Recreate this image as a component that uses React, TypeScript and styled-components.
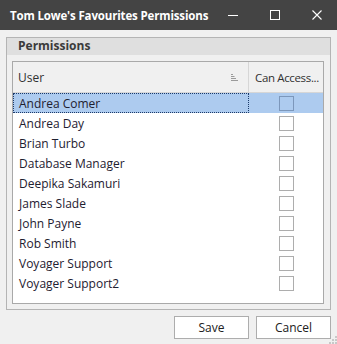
import React, {useState} from 'react';
import styled, {createGlobalStyle} from 'styled-components';

const users = [
    'Andrea Comer',
    'Andrea Day',
    'Brian Turbo',
    'Database Manager',
    'Deepika Sakamuri',
    'James Slade',
    'John Payne',
    'Rob Smith',
    'Voyager Support',
    'Voyager Support2',
];

const App = () => {
    const [selected, setSelected] = useState(0);
    const [access, setAccess] = useState<boolean[]>(users.map(() => false));

    const toggle = (i: number) => {
        setAccess(prev => prev.map((v, idx) => (idx === i ? !v : v)));
    };

    return (
        <>
            <GlobalStyle/>
            <Window>
                <TitleBar>
                    <Title>Tom Lowe's Favourites Permissions</Title>
                    <Controls>
                        <ControlButton>
                            <svg width="10" height="10" viewBox="0 0 10 10">
                                <line x1="0" y1="5.5" x2="10" y2="5.5" stroke="#fff" strokeWidth="1"/>
                            </svg>
                        </ControlButton>
                        <ControlButton>
                            <svg width="10" height="10" viewBox="0 0 10 10">
                                <rect x="0.5" y="0.5" width="9" height="9" fill="none" stroke="#fff" strokeWidth="1"/>
                            </svg>
                        </ControlButton>
                        <ControlButton>
                            <svg width="10" height="10" viewBox="0 0 10 10">
                                <path d="M0.5 0.5 L9.5 9.5 M9.5 0.5 L0.5 9.5" stroke="#fff" strokeWidth="1.1"/>
                            </svg>
                        </ControlButton>
                    </Controls>
                </TitleBar>
                <Body>
                    <Group>
                        <GroupHeader>Permissions</GroupHeader>
                        <Grid>
                            <HeaderRow>
                                <HeaderCell>
                                    User
                                    <SortIcon width="7" height="7" viewBox="0 0 7 7">
                                        <path d="M0 0.5h2M0 2.5h3.5M0 4.5h5M0 6.5h7" stroke="#9a9a9a" strokeWidth="1"/>
                                    </SortIcon>
                                </HeaderCell>
                                <HeaderCell $last><HeaderText>Can Access...</HeaderText></HeaderCell>
                            </HeaderRow>
                            {users.map((u, i) => (
                                <Row key={u} $selected={selected === i} onClick={() => setSelected(i)}>
                                    <NameCell $focused={selected === i}>{u}</NameCell>
                                    <CheckCell>
                                        <CheckBox
                                            $selected={selected === i}
                                            $checked={access[i]}
                                            onClick={() => toggle(i)}
                                        />
                                    </CheckCell>
                                </Row>
                            ))}
                        </Grid>
                    </Group>
                    <Footer>
                        <Button>Save</Button>
                        <Button>Cancel</Button>
                    </Footer>
                    <Grip width="8" height="8" viewBox="0 0 8 8">
                        <rect x="6" y="0" width="2" height="2" fill="#c8c8c8"/>
                        <rect x="3" y="3" width="2" height="2" fill="#c8c8c8"/>
                        <rect x="6" y="3" width="2" height="2" fill="#c8c8c8"/>
                        <rect x="0" y="6" width="2" height="2" fill="#c8c8c8"/>
                        <rect x="3" y="6" width="2" height="2" fill="#c8c8c8"/>
                        <rect x="6" y="6" width="2" height="2" fill="#c8c8c8"/>
                    </Grip>
                </Body>
            </Window>
        </>
    );
};
export default App

const GlobalStyle = createGlobalStyle`
  html, body {
    margin: 0;
    padding: 0;
    background: #f0f0f0;
  }
  body {
    font-family: "Open Sans", "Noto Sans", "Liberation Sans", sans-serif;
    font-size: 12px;
    color: #202020;
  }
`
const Window = styled.div`
  width: 337px;
  height: 344px;
  display: flex;
  flex-direction: column;
  background: #f0f0f0;
  overflow: hidden;
`
const TitleBar = styled.div`
  height: 30px;
  background: #444444;
  display: flex;
  align-items: center;
  justify-content: space-between;
  padding-left: 10px;
  flex-shrink: 0;
`
const Title = styled.div`
  color: #ffffff;
  font-weight: 700;
  font-size: 11.5px;
  letter-spacing: -0.15px;
  white-space: nowrap;
  flex-shrink: 0;
`
const Controls = styled.div`
  display: flex;
  height: 100%;
  margin-right: -1px;
`
const ControlButton = styled.div`
  width: 42px;
  height: 100%;
  display: flex;
  align-items: center;
  justify-content: center;
`
const Body = styled.div`
  position: relative;
  flex: 1;
  display: flex;
  flex-direction: column;
  padding: 7px 6px 0 6px;
`
const Group = styled.div`
  height: 273px;
  box-sizing: border-box;
  border: 1px solid #b4b4b4;
  display: flex;
  flex-direction: column;
  padding: 0 6px 5px 5px;
`
const GroupHeader = styled.div`
  height: 17px;
  margin: 0 -6px 0 -5px;
  background: #dfdfdf;
  font-weight: 700;
  color: #3a3a3a;
  padding-left: 11px;
  line-height: 16px;
  flex-shrink: 0;
`
const Grid = styled.div`
  margin-top: 6px;
  flex: 1;
  border: 1px solid #a9a9a9;
  background: #ffffff;
  display: flex;
  flex-direction: column;
`
const HeaderRow = styled.div`
  height: 30px;
  display: grid;
  grid-template-columns: 236px 1fr;
  background: #f0f0f0;
  border-bottom: 1px solid #d6d6d6;
  flex-shrink: 0;
`
const HeaderCell = styled.div<{ $last?: boolean }>`
  position: relative;
  min-width: 0;
  display: flex;
  align-items: center;
  padding-left: ${p => (p.$last ? '6px' : '5px')};
  padding-right: ${p => (p.$last ? '2px' : '0')};
  border-right: ${p => (p.$last ? 'none' : '1px solid #d6d6d6')};
  color: #303030;
`
const HeaderText = styled.span`
  white-space: nowrap;
  font-size: 11.5px;
  letter-spacing: -0.35px;
`
const SortIcon = styled.svg`
  position: absolute;
  right: 10px;
  top: 12px;
`
const Row = styled.div<{ $selected?: boolean }>`
  height: 20px;
  display: grid;
  grid-template-columns: 236px 1fr;
  background: ${p => (p.$selected ? '#adcbef' : '#ffffff')};
`
const NameCell = styled.div<{ $focused?: boolean }>`
  box-sizing: border-box;
  display: flex;
  align-items: center;
  padding-left: 5px;
  border: 1px dotted ${p => (p.$focused ? '#1c3a6a' : 'transparent')};
  color: #1e2030;
`
const CheckCell = styled.div`
  display: flex;
  align-items: center;
  justify-content: center;
`
const CheckBox = styled.div<{ $selected?: boolean; $checked?: boolean }>`
  box-sizing: border-box;
  width: 15px;
  height: 15px;
  border: 1px solid ${p => (p.$selected ? '#7c97bb' : '#adadad')};
  background: ${p => (p.$checked ? '#5a8ad0' : 'transparent')};
`
const Footer = styled.div`
  margin-top: 6px;
  display: flex;
  justify-content: flex-end;
  gap: 7px;
`
const Button = styled.button`
  width: 75px;
  height: 23px;
  box-sizing: border-box;
  border: 1px solid #adadad;
  background: #ffffff;
  font-family: inherit;
  font-size: 12px;
  color: #202020;
  padding: 0;
`
const Grip = styled.svg`
  position: absolute;
  right: 0;
  bottom: 0;
`
